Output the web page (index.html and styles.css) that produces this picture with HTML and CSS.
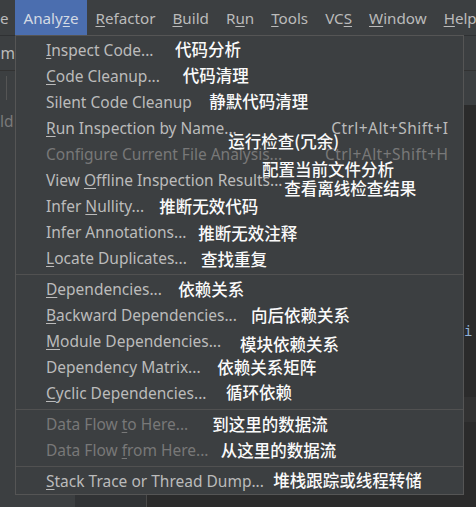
FILE: index.html
```html
<!DOCTYPE html>
<html lang="zh-CN">
<head>
<meta charset="utf-8">
<title>Analyze menu</title>
<link rel="stylesheet" href="styles.css">
</head>
<body>
<div class="ide">
  <div class="menubar">
    <span class="mi first">e</span>
    <span class="mi active">Analy<u>z</u>e</span>
    <span class="mi"><u>R</u>efactor</span>
    <span class="mi"><u>B</u>uild</span>
    <span class="mi">R<u>u</u>n</span>
    <span class="mi"><u>T</u>ools</span>
    <span class="mi">VC<u>S</u></span>
    <span class="mi"><u>W</u>indow</span>
    <span class="mi"><u>H</u>elp</span>
  </div>
  <div class="navbar"><span class="crumb">om</span></div>
  <div class="toolbar"><span class="tsep"></span></div>
  <div class="workspace">
    <div class="project"><span class="ptext">ld</span></div>
    <div class="gutter"></div>
    <div class="editor">
      <div class="codeline"><span class="kw">i</span></div>
      <div class="curline"></div>
    </div>
  </div>
</div>

<div class="popup">
  <div class="row"><span class="label"><u>I</u>nspect Code...</span></div>
  <div class="row"><span class="label"><u>C</u>ode Cleanup...</span></div>
  <div class="row"><span class="label">Silent Code Cleanup</span></div>
  <div class="row"><span class="label"><u>R</u>un Inspection by Name...</span><span class="key">Ctrl+Alt+Shift+I</span></div>
  <div class="row off"><span class="label">Configure Current File Analysis...</span><span class="key">Ctrl+Alt+Shift+H</span></div>
  <div class="row"><span class="label">View <u>O</u>ffline Inspection Results...</span></div>
  <div class="row"><span class="label">Infer <u>N</u>ullity...</span></div>
  <div class="row"><span class="label">Infer Annotations...</span></div>
  <div class="row"><span class="label"><u>L</u>ocate Duplicates...</span></div>
  <div class="sep"></div>
  <div class="row"><span class="label"><u>D</u>ependencies...</span></div>
  <div class="row"><span class="label"><u>B</u>ackward Dependencies...</span></div>
  <div class="row"><span class="label"><u>M</u>odule Dependencies...</span></div>
  <div class="row"><span class="label">Dependency Matrix...</span></div>
  <div class="row"><span class="label"><u>C</u>yclic Dependencies...</span></div>
  <div class="sep"></div>
  <div class="row off"><span class="label">Data Flow <u>t</u>o Here...</span></div>
  <div class="row off"><span class="label">Data Flow <u>f</u>rom Here...</span></div>
  <div class="sep"></div>
  <div class="row"><span class="label"><u>S</u>tack Trace or Thread Dump...</span></div>
</div>

<div class="notes">
  <span class="note n1">代码分析</span>
  <span class="note n2">代码清理</span>
  <span class="note n3">静默代码清理</span>
  <span class="note n4">运行检查(冗余)</span>
  <span class="note n5">配置当前文件分析</span>
  <span class="note n6">查看离线检查结果</span>
  <span class="note n7">推断无效代码</span>
  <span class="note n8">推断无效注释</span>
  <span class="note n9">查找重复</span>
  <span class="note n10">依赖关系</span>
  <span class="note n11">向后依赖关系</span>
  <span class="note n12">模块依赖关系</span>
  <span class="note n13">依赖关系矩阵</span>
  <span class="note n14">循环依赖</span>
  <span class="note n15">到这里的数据流</span>
  <span class="note n16">从这里的数据流</span>
  <span class="note n17">堆栈跟踪或线程转储</span>
</div>
</body>
</html>
```

FILE: styles.css
```css
html, body {
  margin: 0;
  padding: 0;
}

body {
  position: relative;
  width: 476px;
  height: 507px;
  overflow: hidden;
  background: #2b2b2b;
  color: #bbbbbb;
  font-family: "Noto Sans", "Open Sans", "Noto Sans CJK SC", sans-serif;
  font-size: 15.5px;
}

u {
  text-decoration: underline;
  text-decoration-thickness: 1px;
  text-underline-offset: 2px;
}

/* ---------- IDE background ---------- */
.ide {
  display: flex;
  flex-direction: column;
  height: 507px;
}

.menubar {
  flex: none;
  height: 35px;
  display: flex;
  align-items: stretch;
  background: #3c3f41;
  white-space: nowrap;
  font-size: 15.2px;
}

.mi {
  padding: 0 8.5px;
  line-height: 36px;
}

.mi.first {
  padding: 0 6.4px 0 0;
}

.mi.active {
  background: #4b6eaf;
  color: #d3dae4;
}

.navbar {
  flex: none;
  height: 36px;
  box-sizing: border-box;
  background: #3c3f41;
  border-top: 1px solid #2f3133;
  border-bottom: 1px solid #323232;
  display: flex;
  align-items: center;
}

.crumb {
  margin-left: -9px;
  line-height: 20px;
}

.toolbar {
  flex: none;
  height: 34px;
  background: #3c3f41;
  display: flex;
  align-items: center;
  padding-left: 6px;
}

.tsep {
  width: 1px;
  height: 24px;
  background: #555555;
}

.workspace {
  flex: 1;
  display: flex;
}

.project {
  width: 75px;
  background: #3c3f41;
  padding-top: 6px;
}

.ptext {
  display: block;
  color: #7a7a7a;
  line-height: 20px;
}

.gutter {
  width: 71px;
  background: #313335;
  border-right: 1px solid #4a4a4a;
}

.editor {
  flex: 1;
  background: #2b2b2b;
}

.codeline {
  margin-top: 216px;
  height: 20px;
  padding-left: 317px;
  font-family: "DejaVu Sans Mono", "Liberation Mono", monospace;
  font-size: 14px;
  line-height: 20px;
}

.kw {
  color: #8fb0d6;
}

.curline {
  margin-top: 56px;
  height: 25px;
  background: #323232;
}

/* ---------- Popup menu ---------- */
.popup {
  position: absolute;
  left: 15px;
  top: 35px;
  width: 449px;
  box-sizing: border-box;
  background: #3c3f41;
  border: 1px solid #555555;
  padding-top: 1px;
}

.row {
  height: 26px;
  box-sizing: border-box;
  padding: 0 14.5px 0 30px;
  display: flex;
  align-items: center;
  justify-content: space-between;
  line-height: 26px;
  white-space: nowrap;
  color: #bbbbbb;
}

.row.off {
  color: #787878;
}

.key {
  letter-spacing: 0.45px;
}

.sep {
  height: 1px;
  margin: 3px 0 1px;
  background: #515151;
}

/* ---------- Chinese annotations drawn over the shot ---------- */
.notes {
  position: absolute;
  left: 0;
  top: 0;
}

.note {
  position: absolute;
  white-space: nowrap;
  font-family: "Noto Sans CJK SC", "Noto Sans", sans-serif;
  font-size: 16.5px;
  font-weight: 500;
  line-height: 20px;
  color: #fafafa;
}

.n1  { left: 175px; top: 39px; }
.n2  { left: 182.7px; top: 65px; }
.n3  { left: 209.3px; top: 91px; }
.n4  { left: 228.3px; top: 130.7px; }
.n5  { left: 262px; top: 159px; }
.n6  { left: 284.3px; top: 178px; }
.n7  { left: 159.3px; top: 195.7px; }
.n8  { left: 198.3px; top: 223px; }
.n9  { left: 201px; top: 249px; }
.n10 { left: 178.3px; top: 279px; }
.n11 { left: 251px; top: 305px; }
.n12 { left: 240px; top: 334px; }
.n13 { left: 217.3px; top: 357.3px; }
.n14 { left: 226px; top: 382px; }
.n15 { left: 212.3px; top: 413.7px; }
.n16 { left: 220.7px; top: 439.7px; }
.n17 { left: 273.3px; top: 469.7px; }
```
